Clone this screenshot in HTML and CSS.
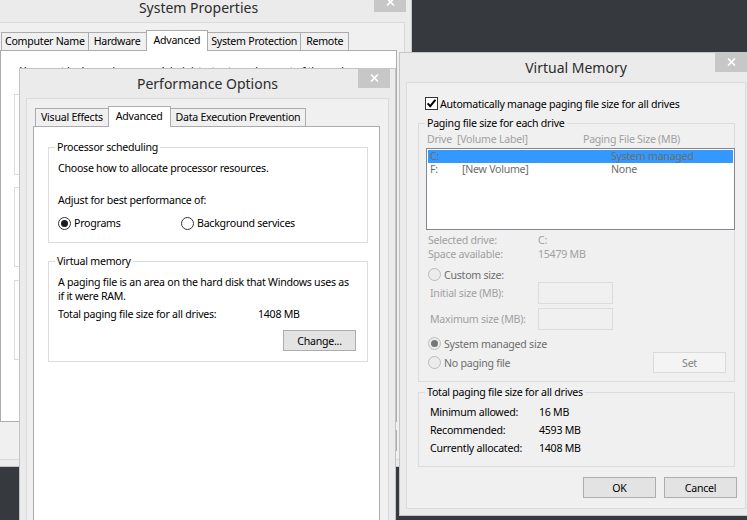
FILE: index.html
```html
<!DOCTYPE html>
<html>
<head>
<meta charset="utf-8">
<title>System Properties</title>
<link rel="stylesheet" href="styles.css">
</head>
<body>
<div class="desktop">

  <!-- System Properties (back) -->
  <div class="window win-sys">
    <div class="titlebar">
      <span class="title">System Properties</span>
      <span class="close"><svg width="9" height="8" viewBox="0 0 9 8"><path d="M1 0.5 L8 7.5 M8 0.5 L1 7.5" stroke="#fff" stroke-width="1.7" fill="none"/></svg></span>
    </div>
    <div class="client">
      <div class="tabs">
        <div class="tab tab-tight">Computer Name</div>
        <div class="tab">Hardware</div>
        <div class="tab active">Advanced</div>
        <div class="tab tab-tight">System Protection</div>
        <div class="tab">Remote</div>
      </div>
      <div class="panel panel-sys">
        <p class="sys-note">You must be logged on as an Administrator to make most of these changes.</p>
        <fieldset class="group sys-group sys-g1">
          <legend>Performance</legend>
          <p class="sys-desc">Visual effects, processor scheduling, memory usage, and virtual memory</p>
        </fieldset>
        <fieldset class="group sys-group sys-g2">
          <legend>User Profiles</legend>
          <p class="sys-desc">Desktop settings related to your sign-in</p>
        </fieldset>
        <fieldset class="group sys-group sys-g3">
          <legend>Startup and Recovery</legend>
          <p class="sys-desc">System startup, system failure, and debugging information</p>
        </fieldset>
      </div>
      <div class="sys-buttons">
        <span class="btn">OK</span>
        <span class="btn">Cancel</span>
        <span class="btn">Apply</span>
      </div>
    </div>
  </div>

  <!-- Performance Options -->
  <div class="window win-perf">
    <div class="titlebar">
      <span class="title">Performance Options</span>
      <span class="close"><svg width="9" height="8" viewBox="0 0 9 8"><path d="M1 0.5 L8 7.5 M8 0.5 L1 7.5" stroke="#fff" stroke-width="1.7" fill="none"/></svg></span>
    </div>
    <div class="client">
      <div class="tabs">
        <div class="tab">Visual Effects</div>
        <div class="tab active">Advanced</div>
        <div class="tab">Data Execution Prevention</div>
      </div>
      <div class="panel panel-perf">
        <fieldset class="group perf-g1">
          <legend>Processor scheduling</legend>
          <p class="perf-line">Choose how to allocate processor resources.</p>
          <p class="perf-line perf-adjust">Adjust for best performance of:</p>
          <div class="radio-row">
            <span class="radio-item perf-programs"><span class="radio checked"></span>Programs</span>
            <span class="radio-item"><span class="radio"></span>Background services</span>
          </div>
        </fieldset>
        <fieldset class="group perf-g2">
          <legend>Virtual memory</legend>
          <p class="perf-line perf-para">A paging file is an area on the hard disk that Windows uses as<br>if it were RAM.</p>
          <div class="perf-total"><span class="perf-total-label">Total paging file size for all drives:</span><span>1408 MB</span></div>
          <div class="perf-change"><span class="btn">Change...</span></div>
        </fieldset>
      </div>
    </div>
  </div>

  <!-- Virtual Memory (front) -->
  <div class="window win-vm">
    <div class="titlebar">
      <span class="title">Virtual Memory</span>
      <span class="close"><svg width="9" height="8" viewBox="0 0 9 8"><path d="M1 0.5 L8 7.5 M8 0.5 L1 7.5" stroke="#fff" stroke-width="1.7" fill="none"/></svg></span>
    </div>
    <div class="client vm-client">
      <div class="check-row">
        <span class="checkbox"><svg width="11" height="11" viewBox="0 0 11 11"><path d="M1.6 5.4 L4.2 8.2 L9.4 1.8" stroke="#000" stroke-width="2" fill="none"/></svg></span>
        <span>Automatically manage paging file size for all drives</span>
      </div>

      <fieldset class="group vm-g1">
        <legend>Paging file size for each drive</legend>
        <div class="vm-header"><span class="vm-header-drive">Drive&nbsp;&nbsp;[Volume Label]</span><span>Paging File Size (MB)</span></div>
        <div class="listbox">
          <div class="list-row selected"><span class="col-drive">C:</span><span class="col-label"></span><span>System managed</span></div>
          <div class="list-row"><span class="col-drive">F:</span><span class="col-label">[New Volume]</span><span>None</span></div>
        </div>
        <div class="vm-info">
          <div class="info-row"><span class="info-label">Selected drive:</span><span>C:</span></div>
          <div class="info-row"><span class="info-label">Space available:</span><span>15479 MB</span></div>
        </div>
        <div class="vm-radio vm-custom"><span class="radio disabled"></span><span>Custom size:</span></div>
        <div class="size-row size-first"><span class="size-label">Initial size (MB):</span><span class="textbox"></span></div>
        <div class="size-row"><span class="size-label">Maximum size (MB):</span><span class="textbox"></span></div>
        <div class="vm-radio vm-system"><span class="radio disabled checked"></span><span>System managed size</span></div>
        <div class="vm-last-row">
          <div class="vm-radio"><span class="radio disabled"></span><span>No paging file</span></div>
          <span class="btn btn-disabled">Set</span>
        </div>
      </fieldset>

      <fieldset class="group vm-g2">
        <legend>Total paging file size for all drives</legend>
        <div class="total-row"><span class="total-label">Minimum allowed:</span><span>16 MB</span></div>
        <div class="total-row"><span class="total-label">Recommended:</span><span>4593 MB</span></div>
        <div class="total-row"><span class="total-label">Currently allocated:</span><span>1408 MB</span></div>
      </fieldset>

      <div class="vm-buttons">
        <span class="btn">OK</span>
        <span class="btn">Cancel</span>
      </div>
    </div>
  </div>

</div>
</body>
</html>
```

FILE: styles.css
```css
* { box-sizing: border-box; }

html, body {
  margin: 0;
  padding: 0;
}

body {
  width: 747px;
  height: 520px;
  overflow: hidden;
  background: #36393e;
  font-family: "Noto Sans", "Open Sans", sans-serif;
  font-size: 10.6px;
  line-height: 14px;
  letter-spacing: -0.25px;
  color: #000;
}

p { margin: 0; }

.desktop {
  position: relative;
  width: 747px;
  height: 520px;
  overflow: hidden;
}

/* ---------- window chrome ---------- */
.window {
  position: absolute;
  display: flex;
  flex-direction: column;
  background: #ebebeb;
  border: 1px solid #c4c4c4;
  padding: 0 6px 6px;
}

.titlebar {
  position: relative;
  flex: none;
  height: 29px;
  display: flex;
  align-items: center;
  justify-content: center;
}

.title {
  font-size: 14px;
  line-height: 18px;
  letter-spacing: 0;
  color: #2b2b2b;
  white-space: nowrap;
}

.close {
  position: absolute;
  top: -1px;
  right: -1px;
  width: 32px;
  height: 20px;
  background: #c7c7c7;
  display: flex;
  align-items: center;
  justify-content: center;
}

.client {
  flex: 1;
  display: flex;
  flex-direction: column;
  background: #f0f0f0;
  border: 1px solid #dadada;
  min-height: 0;
}

/* ---------- tabs ---------- */
.tabs {
  position: relative;
  z-index: 1;
  flex: none;
  display: flex;
  align-items: flex-end;
  height: 20px;
  margin-top: 7px;
}

.tab {
  height: 18px;
  line-height: 17px;
  padding: 0 5px;
  border: 1px solid #acacac;
  border-bottom: 0;
  background: #f0f0f0;
  margin-right: -1px;
  white-space: nowrap;
}

.tab.tab-tight { padding: 0 3px; }

.tab.active {
  position: relative;
  height: 21px;
  line-height: 18px;
  background: #fff;
  margin-bottom: -1px;
  padding: 0 7px;
}

.panel {
  background: #fff;
  border: 1px solid #acacac;
}

/* ---------- group boxes ---------- */
.group {
  margin: 0;
  padding: 0;
  border: 1px solid #dcdcdc;
  min-inline-size: 0;
}

.group legend {
  padding: 0 2px;
  margin-left: 6px;
  line-height: 14px;
}

/* ---------- controls ---------- */
.btn {
  display: inline-flex;
  align-items: center;
  justify-content: center;
  width: 73px;
  height: 21px;
  background: #e3e3e3;
  border: 1px solid #adadad;
  color: #000;
}

.btn-disabled {
  background: #f4f4f4;
  border-color: #dadada;
  color: #838383;
}

.radio {
  display: inline-block;
  flex: none;
  position: relative;
  width: 13px;
  height: 13px;
  border: 1px solid #333;
  border-radius: 50%;
  background: #fff;
  margin-right: 3px;
}

.radio.checked::after {
  content: "";
  position: absolute;
  left: 2px;
  top: 2px;
  width: 7px;
  height: 7px;
  border-radius: 50%;
  background: #1c1c1c;
}

.radio.disabled {
  border-color: #bcbcbc;
  background: #ececec;
}

.radio.disabled.checked::after {
  background: #777;
}

.checkbox {
  display: inline-flex;
  align-items: center;
  justify-content: center;
  width: 13px;
  height: 13px;
  border: 1px solid #333;
  background: #fff;
  margin-right: 2px;
}

.radio-row, .vm-radio {
  display: flex;
  align-items: center;
}

.radio-item {
  display: flex;
  align-items: center;
}

/* ---------- System Properties ---------- */
.win-sys {
  left: -15px;
  top: -8px;
  width: 427px;
  height: 475px;
}

.win-sys .tabs { margin-left: 8px; }
.win-sys .panel {
  flex: none;
  height: 372px;
  margin: 0 7px 0 7px;
  padding: 13px 0 0 13px;
}

.sys-note {
  padding-left: 6px;
  white-space: nowrap;
}

.sys-group {
  width: 368px;
  height: 88px;
  padding: 4px 10px 0;
}

.sys-g1 { margin-top: 9px; }
.sys-g2 { margin-top: 5px; height: 87px; }
.sys-g3 { margin-top: 6px; height: 87px; }

.sys-buttons {
  flex: 1;
  display: flex;
  align-items: center;
  justify-content: flex-end;
  gap: 7px;
  padding-right: 7px;
}

/* ---------- Performance Options ---------- */
.win-perf {
  left: 19px;
  top: 68px;
  width: 377px;
  height: 470px;
}

.win-perf .tabs { margin-left: 8px; }

.panel-perf {
  flex: 1;
  margin: 0 8px 0 6px;
  padding: 13px 11px 0 14px;
}

.perf-g1 { padding: 7px 0 12px 9px; }
.perf-g1 legend,
.perf-g2 legend { margin-left: -3px; }
.perf-adjust { margin-top: 18px; }
.perf-g1 .radio-row { margin-top: 9px; }
.perf-programs { width: 123px; }
.radio-row .radio { margin-right: 3px; }

.perf-g2 {
  margin-top: 11px;
  padding: 7px 11px 10px 9px;
}

.perf-total {
  display: flex;
  margin-top: 4px;
}

.perf-total-label { width: 200px; }

.perf-change {
  display: flex;
  justify-content: flex-end;
  margin-top: 9px;
}

/* ---------- Virtual Memory ---------- */
.win-vm {
  left: 399px;
  top: 52px;
  width: 354px;
  height: 464px;
}

.vm-client {
  padding: 14px 0 0 0;
}

.check-row {
  display: flex;
  align-items: center;
  height: 13px;
  padding-left: 18px;
}

.vm-g1 {
  margin: 6px 0 0 11px;
  width: 317px;
  padding: 2px 0 8px 0;
  color: #000;
}

.vm-header {
  display: flex;
  padding-left: 8px;
  color: #a0a0a0;
}

.vm-header-drive { width: 156px; }

.listbox {
  margin: 2px 0 0 7px;
  width: 309px;
  height: 82px;
  border: 1px solid #828790;
  background: #fff;
  padding: 1px;
}

.list-row {
  display: flex;
  height: 13px;
  line-height: 13px;
  padding-left: 2px;
  color: #6d6d6d;
}

.list-row.selected { background: #3399ff; }

.col-drive { width: 32px; }
.col-label { width: 149px; }

.vm-info {
  margin-top: 3px;
  padding-left: 9px;
  color: #a0a0a0;
}

.info-row { display: flex; }
.info-label { width: 110px; }

.vm-radio {
  height: 13px;
  padding-left: 9px;
  color: #6d6d6d;
}

.vm-custom { margin-top: 7px; }

.size-row {
  display: flex;
  align-items: center;
  height: 22px;
  margin-top: 4px;
  padding-left: 11px;
  color: #a0a0a0;
}

.size-first { margin-top: 1px; }

.size-label { width: 108px; }

.textbox {
  width: 75px;
  height: 22px;
  border: 1px solid #dcdcdc;
  background: #f0f0f0;
}

.vm-system { margin-top: 7px; }

.vm-last-row {
  display: flex;
  align-items: center;
  justify-content: space-between;
  height: 21px;
  margin-top: 2px;
  padding-right: 8px;
}

.vm-last-row .vm-radio { padding-left: 9px; }

.vm-g2 {
  margin: 3px 0 0 11px;
  width: 317px;
  padding: 4px 0 9px 11px;
}

.vm-g2 legend { margin-left: -5px; }

.total-row {
  display: flex;
  line-height: 18px;
}

.total-label { width: 109px; }

.vm-buttons {
  display: flex;
  justify-content: flex-end;
  gap: 8px;
  margin-top: 10px;
  padding-right: 8px;
}
```
